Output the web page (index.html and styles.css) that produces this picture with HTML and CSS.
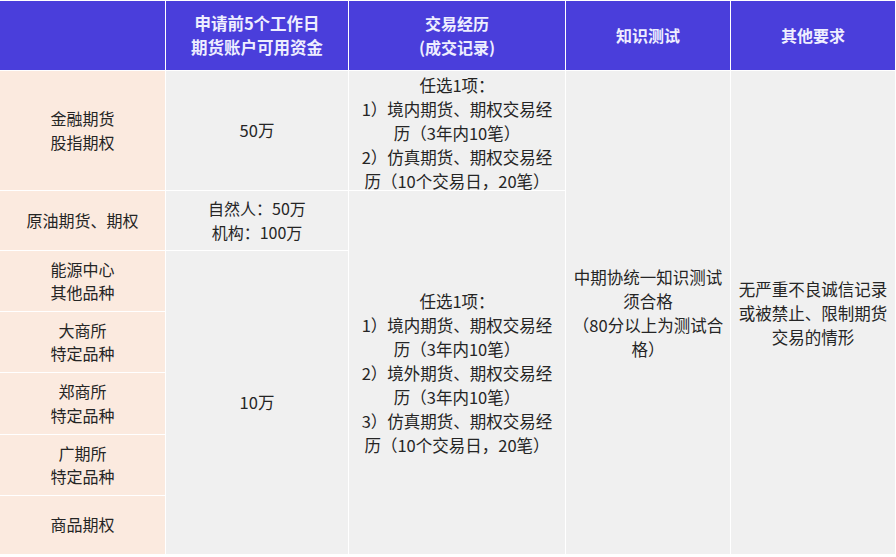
FILE: index.html
```html
<!DOCTYPE html>
<html lang="zh">
<head>
<meta charset="utf-8">
<link rel="stylesheet" href="styles.css">
</head>
<body>
<div class="table">
  <div class="cell head c1"></div>
  <div class="cell head c2">申请前5个工作日<br>期货账户可用资金</div>
  <div class="cell head c3">交易经历<br>(成交记录)</div>
  <div class="cell head c4">知识测试</div>
  <div class="cell head c5">其他要求</div>

  <div class="cell name r1">金融期货<br>股指期权</div>
  <div class="cell body c2 r1">50万</div>
  <div class="cell body c3 r1 exp1">任选1项：<br>1）境内期货、期权交易经<br>历（3年内10笔）<br>2）仿真期货、期权交易经<br>历（10个交易日，20笔）</div>
  <div class="cell body c4 rall">中期协统一知识测试<br>须合格<br>（80分以上为测试合<br>格）</div>
  <div class="cell body c5 rall">无严重不良诚信记录<br>或被禁止、限制期货<br>交易的情形</div>

  <div class="cell name r2">原油期货、期权</div>
  <div class="cell body c2 r2 pair">自然人：50万<br>机构：100万</div>
  <div class="cell body c3 rrest exp2">任选1项：<br>1）境内期货、期权交易经<br>历（3年内10笔）<br>2）境外期货、期权交易经<br>历（3年内10笔）<br>3）仿真期货、期权交易经<br>历（10个交易日，20笔）</div>

  <div class="cell name r3">能源中心<br>其他品种</div>
  <div class="cell body c2 rlow">10万</div>
  <div class="cell name r4">大商所<br>特定品种</div>
  <div class="cell name r5">郑商所<br>特定品种</div>
  <div class="cell name r6">广期所<br>特定品种</div>
  <div class="cell name r7">商品期权</div>
</div>
</body>
</html>
```

FILE: styles.css
```css
html, body {
  margin: 0;
  padding: 0;
  background: #ffffff;
}
body {
  font-family: "Noto Sans CJK SC", "Liberation Sans", sans-serif;
  color: #252525;
}
.table {
  display: grid;
  grid-template-columns: 165px 182px 216px 164px 164px;
  grid-template-rows: 69px 119px 59px 60px 60px 61px 60px 58px;
  gap: 1px;
  padding-top: 1px;
  background: #ffffff;
  width: 895px;
}
.cell {
  display: flex;
  align-items: center;
  justify-content: center;
  text-align: center;
  font-size: 16px;
  line-height: 23.5px;
}
.head {
  grid-row: 1;
  background: #4a3edb;
  color: #eeeeff;
  font-weight: bold;
  font-size: 16px;
  line-height: 23.5px;
}
.c1 { grid-column: 1; }
.c2 { grid-column: 2; }
.c3 { grid-column: 3; }
.c4 { grid-column: 4; }
.c5 { grid-column: 5; }
.name {
  grid-column: 1;
  background: #fbeadf;
  font-size: 16px;
}
.body {
  background: #f0f0f0;
}
.r1 { grid-row: 2; }
.r2 { grid-row: 3; }
.r3 { grid-row: 4; }
.r4 { grid-row: 5; }
.r5 { grid-row: 6; }
.r6 { grid-row: 7; }
.r7 { grid-row: 8; }
.rall { grid-row: 2 / 9; }
.rrest { grid-row: 3 / 9; }
.rlow { grid-row: 4 / 9; }
.c2 { font-size: 16.5px; }
.pair {
  font-size: 16px;
  line-height: 23.5px;
}
.exp1 {
  font-size: 16.5px;
  line-height: 24px;
  padding-top: 4px;
}
.exp2 {
  font-size: 16.5px;
  line-height: 24px;
}
.c4.rall, .c5.rall {
  font-size: 16.5px;
  line-height: 24px;
}
```
